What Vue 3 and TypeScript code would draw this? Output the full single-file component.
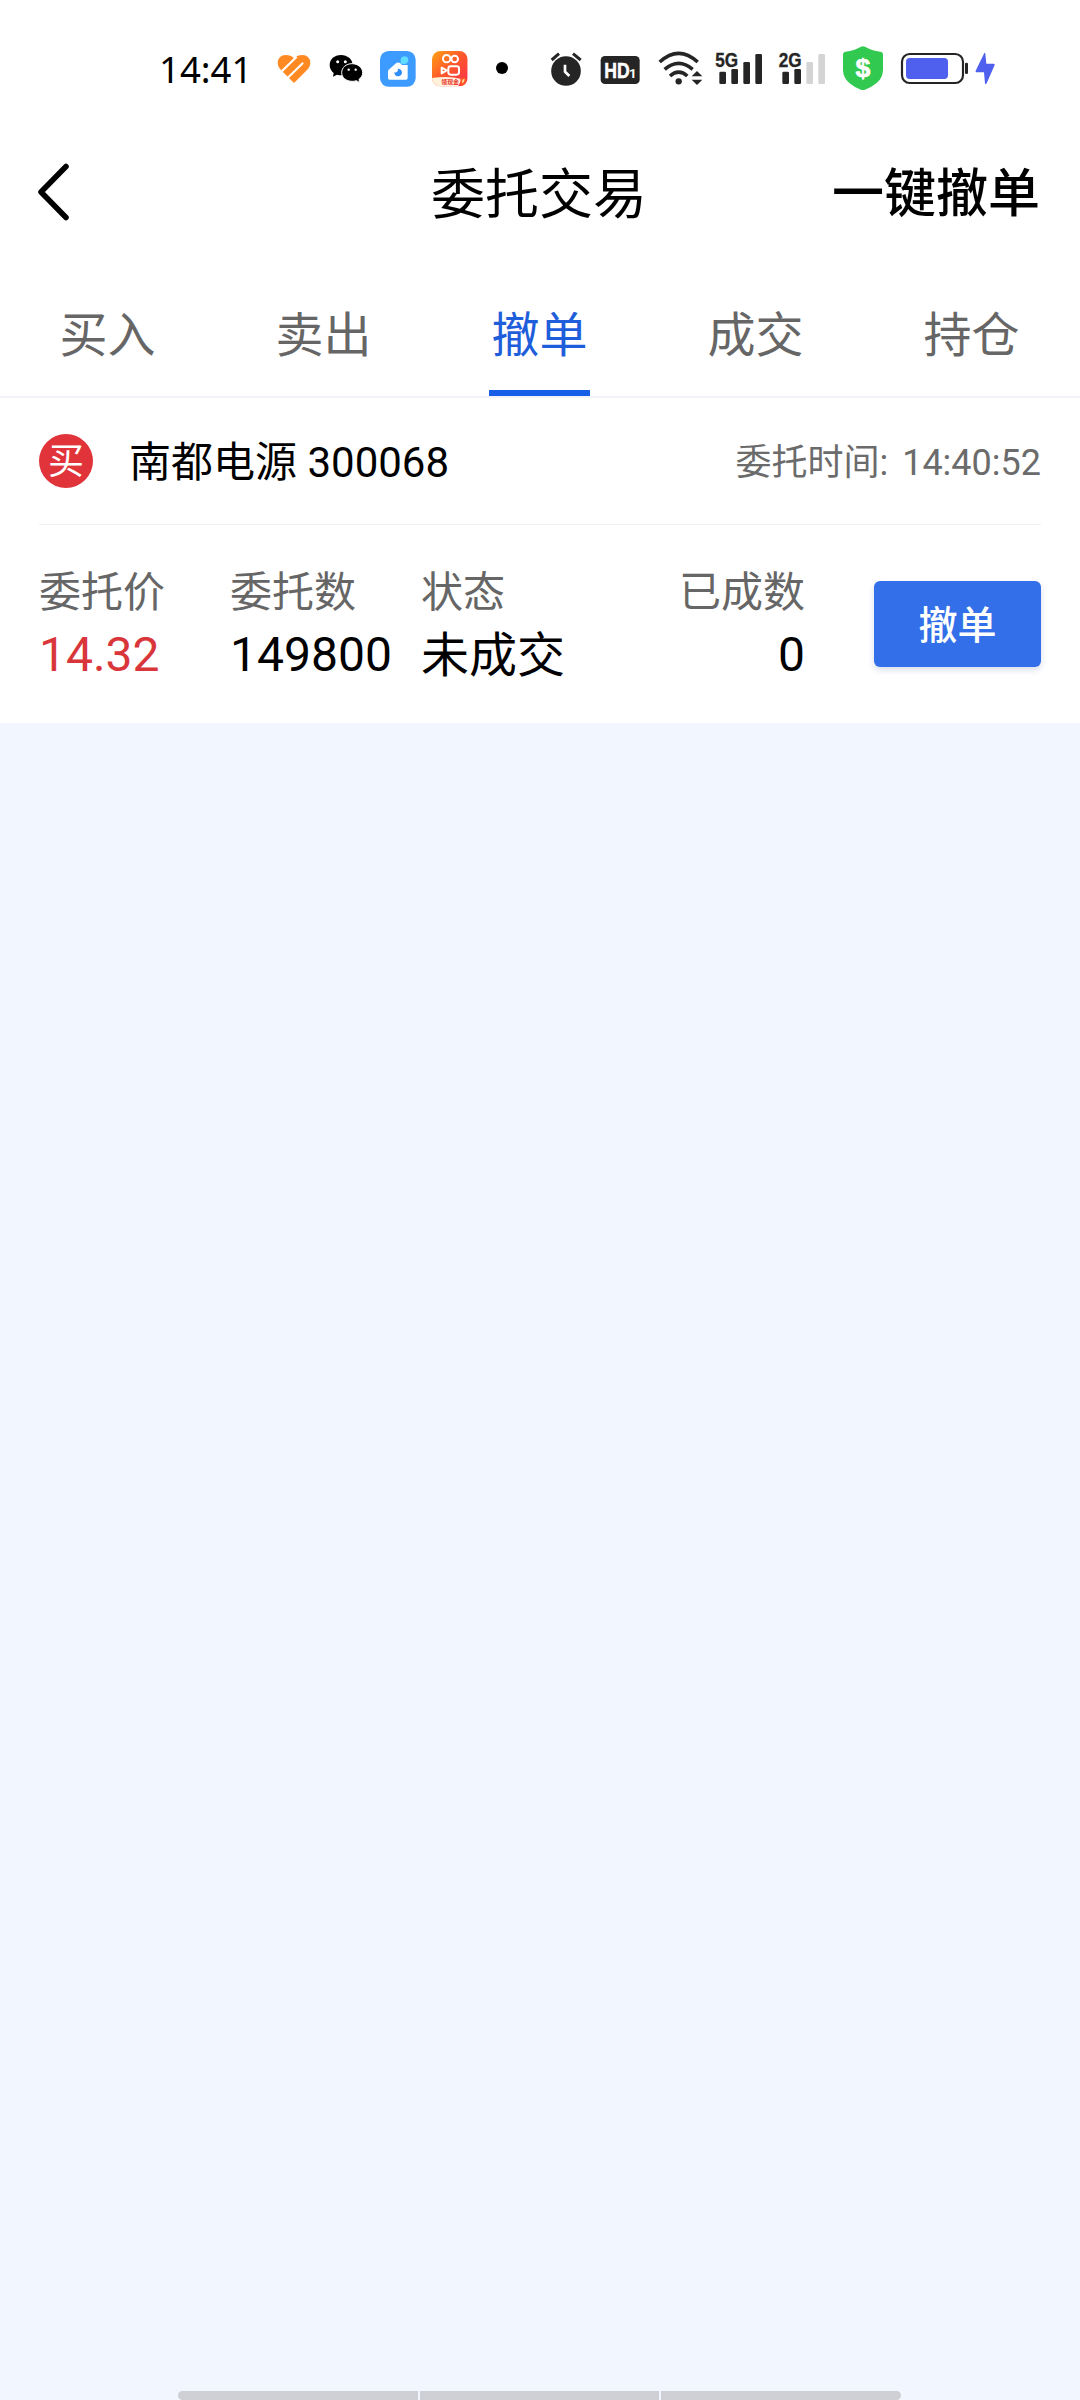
<script setup lang="ts">
interface Tab {
  label: string
  active?: boolean
}

interface Field {
  key: string
  label: string
  value: string
}

const tabs: Tab[] = [
  { label: '买入' },
  { label: '卖出' },
  { label: '撤单', active: true },
  { label: '成交' },
  { label: '持仓' },
]

const fields: Field[] = [
  { key: 'price', label: '委托价', value: '14.32' },
  { key: 'amount', label: '委托数', value: '149800' },
  { key: 'state', label: '状态', value: '未成交' },
  { key: 'filled', label: '已成数', value: '0' },
]
</script>

<template>
  <div class="screen">
    <div class="status">
      <span class="clock">14:41</span>
      <!-- health -->
      <svg width="56" height="80" viewBox="390 0 168 240">
        <path d="M462 159 L420 117 Q413 109 413 99 Q414 76 437 75 Q452 75 462 85 Q472 75 487 75 Q510 76 511 99 Q511 109 504 117 Z" fill="#ff8a24" />
        <path d="M420 129 L470 80" stroke="#fff" stroke-width="6.500" fill="none" />
        <path d="M436 151 L488 100" stroke="#fff" stroke-width="6" stroke-linecap="round" fill="none" />
      </svg>
      <!-- chat -->
      <svg width="46" height="80" viewBox="18 0 138 240">
        <path d="M63 75 C43 75 29 88 29 105 C29 115 34 124 41 129 L39 140 L51 134 Q57 136 65 136 C84 136 98 122 98 105 C98 88 82 75 63 75 Z" fill="#000" />
        <path d="M96 101 C78 101 65 113 65 128 C65 143 79 154 97 154 Q104 154 109 152 L119 158 L117 148 C124 143 128 136 128 128 C128 113 114 101 96 101 Z" fill="#000" stroke="#fff" stroke-width="3" />
        <g fill="#fff"><circle cx="53" cy="95" r="4.5" /><circle cx="76" cy="95" r="4.5" /><circle cx="86" cy="119" r="3.5" /><circle cx="107" cy="119" r="3.5" /></g>
      </svg>
      <!-- smart home -->
      <svg width="52" height="80" viewBox="156 0 156 240">
        <rect x="180" y="63" width="107" height="107" rx="26" fill="#3d9bff" />
        <path d="M206 119 L229 99 Q235 95 241 100 L245 104 Q249 106 254 105 L263 105 V144 Q263 149 258 149 H209 Q204 149 204 144 V124 Q204 121 206 119 Z" fill="#fff" />
        <path d="M242 101 V90 Q243 79 254 79 Q265 80 265 91 Q264 102 253 102 Z" fill="#5fdcff" />
        <path d="M234 116 A11.500 11.500 0 1 1 223 127 Q234 129 234 116 Z" fill="#2f8df8" />
      </svg>
      <!-- short video -->
      <svg width="52" height="80" viewBox="312 0 156 240">
        <defs>
          <linearGradient id="video-bg" x1="0" y1="0" x2="1" y2="1">
            <stop offset="0" stop-color="#ffa414" />
            <stop offset="0.45" stop-color="#ff5a2a" />
            <stop offset="1" stop-color="#fb2e4c" />
          </linearGradient>
          <clipPath id="video-clip"><rect x="336" y="63" width="107" height="106" rx="25" /></clipPath>
        </defs>
        <g clip-path="url(#video-clip)">
          <rect x="336" y="63" width="107" height="107" fill="url(#video-bg)" />
          <path d="M336 144 Q385 137 425 147 L414 170 H336 Z" fill="#fff1dc" />
          <path d="M421 164 Q424 153 420 146 L433 142 Q440 148 438 157 Q435 166 425 168 Z" fill="#ff5724" />
          <path d="M427 149 L434 146 L432 156 L426 160 Z" fill="#ffd49a" />
        </g>
        <g fill="none" stroke="#fff" stroke-width="6">
          <circle cx="380" cy="86" r="11" /><circle cx="404" cy="87" r="10" />
          <rect x="385" y="109" width="32" height="25" rx="7" />
          <path d="M365 113 L380 121 L365 130 Z" stroke-linejoin="round" />
        </g>
        <text x="364" y="163" class="mini" font-size="17.500" fill="#ed3428">领现金</text>
      </svg>
      <svg width="64" height="80" viewBox="468 0 192 240"><circle cx="546" cy="114" r="18" fill="#000" /></svg>
      <!-- alarm -->
      <svg width="54" height="80" viewBox="30 0 162 240">
        <circle cx="108" cy="123" r="44.500" fill="#252525" />
        <path d="M65 90 L87 71 M129 71 L152 90" stroke="#252525" stroke-width="9" />
        <path d="M105 104 V125 L118 138" stroke="#fff" stroke-width="8" fill="none" />
      </svg>
      <!-- voice over LTE -->
      <svg width="56" height="80" viewBox="192 0 168 240">
        <rect x="212" y="78" width="117" height="84" rx="13" fill="#252525" />
        <text transform="translate(223 143) scale(0.8 1)" class="glyph" font-size="66" fill="#fff" stroke="#fff" stroke-width="1.500">HD</text>
        <text x="297" y="143" class="digit" font-size="40" fill="#fff">1</text>
      </svg>
      <!-- wifi -->
      <svg width="56" height="80" viewBox="360 0 168 240">
        <g fill="none" stroke="#252525" stroke-width="11">
          <path d="M389 96 Q446 44 503 96" />
          <path d="M404 118 Q446 82 488 118" />
          <path d="M420 138 Q446 115 472 138" />
        </g>
        <circle cx="446" cy="154" r="9.500" fill="#252525" />
        <path d="M485 139 L501 123 L517 139 Z M485 149 L501 165 L517 149 Z" fill="#252525" />
      </svg>
      <!-- 5G signal -->
      <svg width="68" height="80" viewBox="48 0 204 240">
        <g fill="#252525">
          <rect x="88" y="125" width="20" height="37" rx="4" /><rect x="124" y="117" width="20" height="45" rx="4" />
          <rect x="160" y="96" width="20" height="66" rx="4" /><rect x="196" y="72" width="20" height="90" rx="4" />
        </g>
        <text transform="translate(76 110) scale(0.83 1)" class="glyph" font-size="62" fill="#252525" stroke="#252525" stroke-width="1">5G</text>
      </svg>
      <!-- 2G signal -->
      <svg width="64" height="80" viewBox="252 0 192 240">
        <g fill="#252525"><rect x="277" y="125" width="20" height="37" rx="4" /><rect x="313" y="117" width="20" height="45" rx="4" /></g>
        <g fill="#d4d4d4"><rect x="349" y="96" width="20" height="66" rx="4" /><rect x="385" y="72" width="20" height="90" rx="4" /></g>
        <text transform="translate(266 110) scale(0.83 1)" class="glyph" font-size="62" fill="#252525" stroke="#252525" stroke-width="1">2G</text>
      </svg>
      <!-- payment guard -->
      <svg width="57" height="80" viewBox="24 0 171 240">
        <path d="M93 50 Q99 47 105 50 Q125 62 151 65 Q159 66 159 74 V120 Q158 145 140 159 Q123 173 105 179 Q99 181 93 179 Q74 173 58 159 Q40 145 39 120 V74 Q39 66 47 65 Q73 62 93 50 Z" fill="#31c94f" />
        <text x="99" y="142" class="glyph" font-size="80" text-anchor="middle" fill="#fff" stroke="#fff" stroke-width="2">$</text>
      </svg>
      <!-- battery -->
      <svg width="77" height="80" viewBox="195 0 231 240">
        <rect x="216" y="72" width="183" height="87" rx="23" fill="#fff" stroke="#252525" stroke-width="6.500" />
        <rect x="228" y="84" width="126" height="63" rx="11" fill="#4e60ed" />
        <rect x="405" y="98" width="9" height="34" rx="4" fill="#252525" />
      </svg>
      <svg width="28" height="80" viewBox="426 0 84 240">
        <path d="M463 69 L437 122 Q436 127 440 127 H462 L465 161 Q468 163 470 160 L494 105 Q495 101 490 101 H469 L466 71 Q465 67 463 69 Z" fill="#4e60ed" />
      </svg>
    </div>

    <header class="nav">
      <div class="side">
        <svg width="40" height="64" viewBox="0 0 40 64">
          <path d="M31 6.500 L6 32 L31 57.500" fill="none" stroke="#000" stroke-width="5.500" stroke-linecap="round" stroke-linejoin="round" />
        </svg>
      </div>
      <h1 class="title">委托交易</h1>
      <div class="side end">一键撤单</div>
    </header>

    <nav class="tabs">
      <div v-for="tab in tabs" :key="tab.label" class="tab" :class="{ active: tab.active }">
        <span class="tab-label">{{ tab.label }}</span>
        <span class="tab-line"></span>
      </div>
    </nav>

    <section class="order">
      <div class="order-head">
        <span class="badge">买</span>
        <span class="stock">南都电源 300068</span>
        <span class="time">委托时间:<span class="time-value">14:40:52</span></span>
      </div>
      <div class="order-body">
        <div v-for="field in fields" :key="field.key" class="field" :class="field.key">
          <span class="label">{{ field.label }}</span>
          <span class="value">{{ field.value }}</span>
        </div>
        <button class="cancel" type="button">撤单</button>
      </div>
    </section>

    <div class="handle"><i></i><i></i><i></i></div>
  </div>
</template>

<style>
body {
  margin: 0;
}
</style>

<style scoped>
.screen {
  box-sizing: border-box;
  width: 1080px;
  height: 2400px;
  display: flex;
  flex-direction: column;
  overflow: hidden;
  background: #f2f6ff;
  color: #000;
  font-family: Roboto, 'Noto Sans CJK SC', sans-serif;
}

.status {
  height: 120px;
  box-sizing: border-box;
  padding: 30px 0 0 159px;
  display: flex;
  background: #fff;
}

.status svg {
  flex: none;
  display: block;
}

.clock {
  width: 111px;
  font-family: 'Noto Sans', sans-serif;
  font-size: 36.5px;
  line-height: 78px;
}

.glyph {
  font-family: 'Liberation Sans', sans-serif;
  font-weight: 700;
}

.digit {
  font-family: Roboto, sans-serif;
  font-weight: 700;
}

.mini {
  font-family: 'Noto Sans CJK SC', sans-serif;
  font-weight: 700;
}

.nav {
  height: 150px;
  box-sizing: border-box;
  padding: 0 40px 7px 35px;
  display: flex;
  align-items: center;
  background: #fff;
}

.side {
  flex: 1 1 0;
  display: flex;
}

.side.end {
  justify-content: flex-end;
  padding-top: 7px;
  font-size: 52px;
  font-weight: 500;
  line-height: 76px;
}

.title {
  margin: 0;
  padding: 9px 0 0 3px;
  font-size: 54px;
  font-weight: 400;
  line-height: 76px;
}

.tabs {
  height: 128px;
  box-sizing: border-box;
  display: flex;
  background: #fff;
  border-bottom: 2px solid #f2f3f8;
}

.tab {
  width: 216px;
  display: flex;
  flex-direction: column;
  align-items: center;
  justify-content: space-between;
  color: #666;
}

.tab-label {
  padding: 30px 1px 0 0;
  font-size: 48px;
  line-height: 72px;
}

.tab-line {
  width: 101px;
  height: 6px;
  margin-right: 2px;
}

.active {
  color: #1f5edb;
}

.active .tab-line {
  background: #185ee6;
}

.order {
  height: 325px;
  background: #fff;
}

.order-head {
  height: 127px;
  box-sizing: border-box;
  margin: 0 39px;
  display: flex;
  align-items: center;
  border-bottom: 1px solid #efefef;
}

.badge {
  width: 54px;
  height: 54px;
  border-radius: 50%;
  background: #e0333a;
  color: #fff;
  font-size: 36px;
  line-height: 57px;
  text-align: center;
}

.stock {
  margin-left: 36px;
  padding-top: 3px;
  font-size: 42px;
  line-height: 60px;
  white-space: pre;
}

.time {
  margin-left: auto;
  padding-top: 4px;
  color: #6b6b6b;
  font-size: 36px;
  line-height: 60px;
}

.time-value {
  margin-left: 14px;
}

.order-body {
  height: 198px;
  box-sizing: border-box;
  padding: 38px 39px 0;
  display: flex;
  align-items: flex-start;
}

.field {
  display: flex;
  flex-direction: column;
}

.price,
.amount {
  width: 191px;
}

.state {
  width: 230px;
}

.filled {
  width: 154px;
  align-items: flex-end;
}

.label {
  color: #666;
  font-size: 42px;
  line-height: 60px;
}

.value {
  font-size: 48px;
  line-height: 64px;
}

.price .value {
  color: #d9363b;
}

.state .value {
  padding-top: 1px;
}

.cancel {
  width: 167px;
  height: 86px;
  margin: 18px 0 0 auto;
  padding: 4px 0 0;
  border: 0;
  border-radius: 6px;
  background: #326fe8;
  box-shadow: 0 3px 6px rgba(50, 80, 150, 0.18);
  color: #fff;
  font-family: inherit;
  font-size: 39px;
  font-weight: 500;
  line-height: 82px;
}

.handle {
  width: 723px;
  height: 9px;
  margin: auto auto 0 178px;
  display: flex;
  gap: 2px;
  overflow: hidden;
  border-radius: 5px;
}

.handle i {
  flex: 1;
  background: #cfd0d5;
}
</style>
